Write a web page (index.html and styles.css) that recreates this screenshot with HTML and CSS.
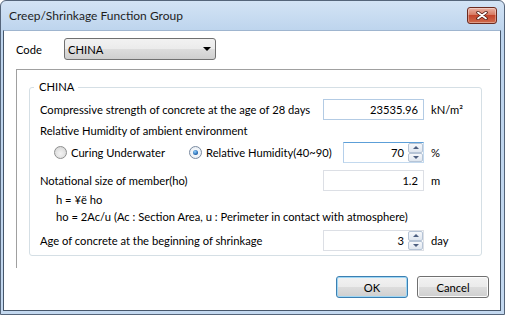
FILE: index.html
```html
<!DOCTYPE html>
<html lang="en">
<head>
    <meta charset="UTF-8">
    <title>Creep/Shrinkage Function Group</title>
    <link rel="stylesheet" href="styles.css">
</head>
<body>
    <div class="window">
        <div class="titlebar">
            <span class="title">Creep/Shrinkage Function Group</span>
            <button class="close" type="button">
                <svg width="12" height="9" viewBox="0 0 12 9">
                    <path d="M2 1.5 L10 7.5 M10 1.5 L2 7.5" stroke="#4a1810" stroke-width="3.4" stroke-linecap="round"/>
                    <path d="M2 1.5 L10 7.5 M10 1.5 L2 7.5" stroke="#fff" stroke-width="1.8" stroke-linecap="round"/>
                </svg>
            </button>
        </div>

        <div class="client">
            <div class="code-row">
                <span class="code-label">Code</span>
                <div class="combo">
                    <span class="combo-text">CHINA</span>
                    <span class="combo-arrow"></span>
                </div>
            </div>

            <div class="panel">
                <fieldset class="group">
                    <legend>CHINA</legend>

                    <div class="row">
                        <span class="label">Compressive strength of concrete at the age of 28 days</span>
                        <div class="field blue"><span class="value">23535.96</span></div>
                        <span class="unit">kN/m²</span>
                    </div>

                    <div class="line">Relative Humidity of ambient environment</div>

                    <div class="row radio-row">
                        <label class="radio first"><span class="dot"></span>Curing Underwater</label>
                        <label class="radio checked"><span class="dot"></span>Relative Humidity(40~90)</label>
                        <div class="field spin short focus">
                            <span class="value">70</span>
                            <div class="spin-btns">
                                <span class="spin-btn up"></span>
                                <span class="spin-btn down"></span>
                            </div>
                        </div>
                        <span class="unit">%</span>
                    </div>

                    <div class="row gap-ho">
                        <span class="label">Notational size of member(ho)</span>
                        <div class="field"><span class="value">1.2</span></div>
                        <span class="unit">m</span>
                    </div>
                    <div class="line indent">h = ¥ë ho</div>
                    <div class="line indent">ho = 2Ac/u (Ac : Section Area, u : Perimeter in contact with atmosphere)</div>

                    <div class="row gap-age">
                        <span class="label">Age of concrete at the beginning of shrinkage</span>
                        <div class="field spin">
                            <span class="value">3</span>
                            <div class="spin-btns">
                                <span class="spin-btn up"></span>
                                <span class="spin-btn down"></span>
                            </div>
                        </div>
                        <span class="unit">day</span>
                    </div>
                </fieldset>
            </div>

            <div class="buttons">
                <button class="btn default" type="button">OK</button>
                <button class="btn" type="button">Cancel</button>
            </div>
        </div>
    </div>
</body>
</html>
```

FILE: styles.css
```css
/* General */
body {
    margin: 0;
    font-family: Lato, "Noto Sans", sans-serif;
    font-size: 11.2px;
    color: #000;
    background: #fff;
}

/* Window frame */
.window {
    width: 505px;
    height: 315px;
    box-sizing: border-box;
    border: 1px solid #55657a;
    border-radius: 6px 6px 0 0;
    background: linear-gradient(#d3e3f5, #bdd4ed 30px, #c3d8ef);
    padding: 0 3px 3px 2px;
    display: flex;
    flex-direction: column;
}

.titlebar {
    height: 29px;
    display: flex;
    align-items: center;
    justify-content: space-between;
    padding: 0 4px 0 6px;
}
.title {
    color: #1e1e1e;
    font-size: 12px;
}
.close {
    width: 30px;
    height: 17px;
    padding: 0;
    border: 1px solid #6b2a1f;
    border-radius: 3px;
    background: linear-gradient(#eab3a5, #d77a62 45%, #c4452c 50%, #cf6c4e);
    display: flex;
    align-items: center;
    justify-content: center;
    box-shadow: inset 0 0 0 1px rgba(255, 255, 255, 0.35);
}

/* Client area */
.client {
    flex: 1;
    background: #fff;
    border: 1px solid #46566a;
    border-top-color: #9fb5cf;
    display: flex;
    flex-direction: column;
}

/* Code row */
.code-row {
    display: flex;
    align-items: center;
    padding: 7px 0 0 12px;
}
.code-label {
    width: 48px;
}
.combo {
    width: 152px;
    height: 22px;
    box-sizing: border-box;
    border: 1px solid #707070;
    border-radius: 3px;
    background: linear-gradient(#f2f2f2, #ebebeb 50%, #dddddd 50%, #cfcfcf);
    display: flex;
    align-items: center;
    justify-content: space-between;
    padding: 0 3px 0 3px;
}
.combo-arrow {
    width: 0;
    height: 0;
    border-left: 4px solid transparent;
    border-right: 4px solid transparent;
    border-top: 4px solid #000;
    margin-right: 1px;
}

/* Outer panel */
.panel {
    margin: 9px 10px 0 12px;
    border-top: 1px solid #a0a0a0;
    border-left: 1px solid #a0a0a0;
    padding: 10px 8px 12px 12px;
}

/* Group box */
.group {
    margin: 0;
    min-inline-size: 0;
    border: 1px solid #d5dfe5;
    border-radius: 3px;
    padding: 5px 0 4px 10px;
}
.group legend {
    line-height: 14px;
    padding: 0 4px 0 5px;
    margin-left: -6px;
}

.row {
    display: flex;
    align-items: center;
    height: 21px;
}
.label {
    flex: 1;
    white-space: nowrap;
}
.line {
    height: 17px;
    line-height: 17px;
    white-space: nowrap;
}
.row + .line {
    margin-top: 2px;
}
.indent {
    padding-left: 16px;
}
.radio-row {
    margin-top: 3px;
    padding-left: 14px;
}
.gap-ho {
    margin-top: 7px;
}
.gap-age {
    margin-top: 5px;
}
.row + .line.indent {
    margin-top: 0;
}

/* Text fields */
.field {
    flex-shrink: 0;
    width: 101px;
    height: 21px;
    box-sizing: border-box;
    border: 1px solid #dcdfe5;
    display: flex;
    align-items: center;
    background: #fff;
}
.field.blue {
    border-color: #b3cbe4;
}
.field.focus {
    border-color: #5c9fd8 #c3d9ee #c3d9ee #b5cfea;
}
.field.short {
    width: 81px;
}
.value {
    flex: 1;
    text-align: right;
    padding-right: 5px;
}
.spin .value {
    padding-right: 4px;
}
.spin-btns {
    width: 15px;
    align-self: stretch;
    display: flex;
    flex-direction: column;
}
.spin-btn {
    flex: 1;
    box-sizing: border-box;
    border: 1px solid #b6c4d6;
    border-radius: 2px;
    background: linear-gradient(#f6f8fb, #dfe6ef);
    display: flex;
    align-items: center;
    justify-content: center;
}
.spin-btn::after {
    content: "";
    width: 0;
    height: 0;
    border-left: 3px solid transparent;
    border-right: 3px solid transparent;
}
.spin-btn.up::after {
    border-bottom: 3px solid #4d5f80;
}
.spin-btn.down::after {
    border-top: 3px solid #4d5f80;
}
.unit {
    flex-shrink: 0;
    width: 50px;
    margin-left: 7px;
}

/* Radio buttons */
.radio {
    display: flex;
    align-items: center;
    white-space: nowrap;
}
.radio.first {
    width: 135px;
}
.radio.checked {
    flex: 1;
}
.dot {
    width: 13px;
    height: 13px;
    box-sizing: border-box;
    border: 1px solid #8e8f8f;
    border-radius: 50%;
    margin-right: 4px;
    background: radial-gradient(circle at 50% 60%, #f4f4f4, #d2d2d2);
    display: flex;
    align-items: center;
    justify-content: center;
}
.checked .dot {
    border-color: #7a8aa0;
    background: radial-gradient(circle, #fff, #e2e9f1);
}
.checked .dot::after {
    content: "";
    width: 5px;
    height: 5px;
    border-radius: 50%;
    background: radial-gradient(circle at 40% 35%, #8fd0ff, #1b5ea8 70%, #123e74);
}

/* Buttons */
.buttons {
    display: flex;
    justify-content: flex-end;
    gap: 9px;
    margin-top: 8px;
    padding-right: 11px;
}
.btn {
    width: 72px;
    height: 22px;
    padding: 0;
    font-family: inherit;
    font-size: 11.2px;
    color: #000;
    border: 1px solid #707070;
    border-radius: 3px;
    background: linear-gradient(#f2f2f2, #ebebeb 50%, #dddddd 50%, #cfcfcf);
    box-shadow: inset 0 0 0 1px #fcfcfc;
}
.btn.default {
    border-color: #3c7fb1;
    box-shadow: inset 0 0 0 1px #9fd7f5;
}
```
